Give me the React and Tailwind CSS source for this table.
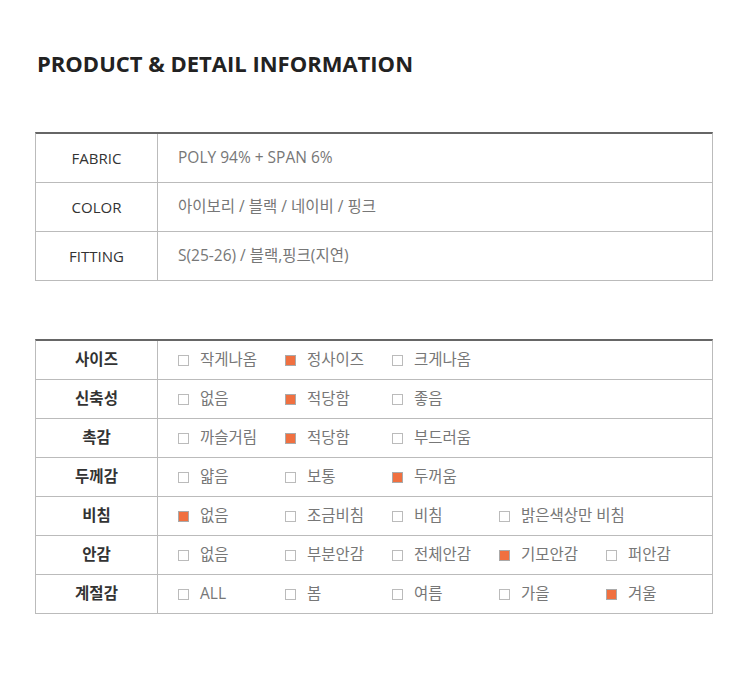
import React from "react";

const info = [
  ["FABRIC", "POLY 94% + SPAN 6%"],
  ["COLOR", "아이보리 / 블랙 / 네이비 / 핑크"],
  ["FITTING", "S(25-26) / 블랙,핑크(지연)"],
];

const detail = [
  ["사이즈", [["작게나옴", 0], ["정사이즈", 1], ["크게나옴", 0]]],
  ["신축성", [["없음", 0], ["적당함", 1], ["좋음", 0]]],
  ["촉감", [["까슬거림", 0], ["적당함", 1], ["부드러움", 0]]],
  ["두께감", [["얇음", 0], ["보통", 0], ["두꺼움", 1]]],
  ["비침", [["없음", 1], ["조금비침", 0], ["비침", 0], ["밝은색상만 비침", 0]]],
  ["안감", [["없음", 0], ["부분안감", 0], ["전체안감", 0], ["기모안감", 1], ["퍼안감", 0]]],
  ["계절감", [["ALL", 0], ["봄", 0], ["여름", 0], ["가을", 0], ["겨울", 1]]],
];

const font = { fontFamily: '"Open Sans", "Noto Sans CJK KR", sans-serif' };

export default function App() {
  return (
    <div className="w-[750px] h-[696px] bg-white" style={font}>
      <div className="pt-[48px] pl-[37px]">
        <h1 className="text-[22px] leading-[30px] font-bold text-[#222]">
          PRODUCT &amp; DETAIL INFORMATION
        </h1>
      </div>
      <div className="mt-[54px] ml-[35px] w-[678px] border-t-2 border-t-[#666] border-l border-r border-[#bbb]">
        {info.map(([k, v]) => (
          <div key={k} className="flex h-[49px] border-b border-[#bbb]">
            <div className="w-[122px] shrink-0 border-r border-[#bbb] flex items-center justify-center text-[15px] text-[#333]">
              {k}
            </div>
            <div className="flex-1 min-w-0 flex items-center pl-[20px] text-[15.5px] text-[#777]">{v}</div>
          </div>
        ))}
      </div>
      <div className="mt-[58px] ml-[35px] w-[678px] border-t-2 border-t-[#666] border-l border-r border-[#bbb]">
        {detail.map(([k, opts]) => (
          <div key={k} className="flex h-[39px] border-b border-[#bbb]">
            <div className="w-[122px] shrink-0 border-r border-[#bbb] flex items-center justify-center text-[15.5px] font-bold text-[#333]">
              {k}
            </div>
            <div className="flex-1 min-w-0 flex items-center pl-[20px]">
              {opts.map(([t, on]) => (
                <div key={t} className="w-[107px] flex items-center shrink-0">
                  <span
                    className={
                      on
                        ? "w-[11px] h-[11px] border border-[#aaa] bg-[#f07040] shrink-0"
                        : "w-[11px] h-[11px] border border-[#bbb] bg-white shrink-0"
                    }
                  />
                  <span className="ml-[11px] text-[15.5px] text-[#777] whitespace-nowrap">{t}</span>
                </div>
              ))}
            </div>
          </div>
        ))}
      </div>
    </div>
  );
}
